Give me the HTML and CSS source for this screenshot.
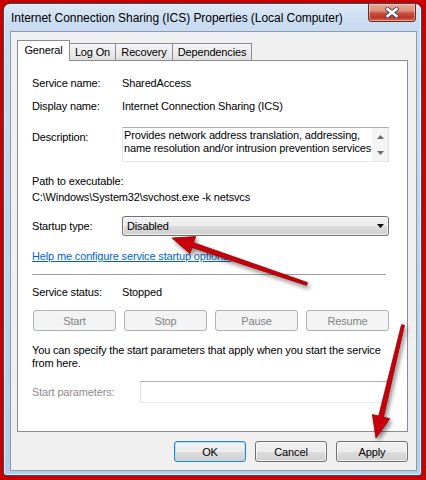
FILE: index.html
```html
<!DOCTYPE html>
<html lang="en">
<head>
    <meta charset="UTF-8">
    <title>Internet Connection Sharing (ICS) Properties (Local Computer)</title>
    <link rel="stylesheet" href="styles.css">
</head>
<body>
    <div class="window">
        <div class="titlebar">
            <span class="title">Internet Connection Sharing (ICS) Properties (Local Computer)</span>
            <div class="close">
                <svg width="14" height="11" viewBox="-7 -5.5 14 11">
                    <path d="M-4.5 -3.5 L4.5 3.5 M4.5 -3.5 L-4.5 3.5" stroke="#404a56" stroke-width="4.4" stroke-linecap="square"/>
                    <path d="M-4.5 -3.5 L4.5 3.5 M4.5 -3.5 L-4.5 3.5" stroke="#fff" stroke-width="2.4" stroke-linecap="square"/>
                </svg>
            </div>
        </div>

        <div class="client">
            <div class="tabs">
                <div class="tab tab-active">General</div>
                <div class="tab tab-logon">Log On</div>
                <div class="tab tab-recovery">Recovery</div>
                <div class="tab tab-deps">Dependencies</div>
            </div>

            <div class="panel">
                <div class="row">
                    <span class="label">Service name:</span>
                    <span>SharedAccess</span>
                </div>
                <div class="row row-display">
                    <span class="label">Display name:</span>
                    <span>Internet Connection Sharing (ICS)</span>
                </div>
                <div class="row row-desc">
                    <span class="label label-desc">Description:</span>
                    <div class="desc-box">
                        <div class="desc-text">Provides network address translation, addressing,<br>name resolution and/or intrusion prevention services</div>
                        <div class="scroll">
                            <svg width="7" height="4" viewBox="0 0 7 4"><path d="M0 4 L3.5 0 L7 4 Z" fill="#6b6b6b"/></svg>
                            <svg width="7" height="4" viewBox="0 0 7 4"><path d="M0 0 L3.5 4 L7 0 Z" fill="#6b6b6b"/></svg>
                        </div>
                    </div>
                </div>

                <div class="path-label">Path to executable:</div>
                <div class="path-value">C:\Windows\System32\svchost.exe -k netsvcs</div>

                <div class="row row-startup">
                    <span class="label">Startup type:</span>
                    <div class="combo">
                        <span>Disabled</span>
                        <svg width="7" height="4" viewBox="0 0 7 4"><path d="M0 0 L3.5 4 L7 0 Z" fill="#000"/></svg>
                    </div>
                </div>

                <a class="help-link" href="#">Help me configure service startup options.</a>

                <div class="separator"></div>

                <div class="row row-status">
                    <span class="label">Service status:</span>
                    <span>Stopped</span>
                </div>

                <div class="service-buttons">
                    <button class="btn" disabled>Start</button>
                    <button class="btn" disabled>Stop</button>
                    <button class="btn" disabled>Pause</button>
                    <button class="btn" disabled>Resume</button>
                </div>

                <p class="note">You can specify the start parameters that apply when you start the service<br>from here.</p>

                <div class="row row-params">
                    <span class="label label-params">Start parameters:</span>
                    <div class="params-input"></div>
                </div>
            </div>

            <div class="dialog-buttons">
                <button class="btn btn-default">OK</button>
                <button class="btn">Cancel</button>
                <button class="btn">Apply</button>
            </div>
        </div>
    </div>

    <svg class="arrows" width="426" height="480" viewBox="0 0 426 480">
        <defs>
            <filter id="shadow" x="-30%" y="-30%" width="160%" height="160%">
                <feDropShadow dx="2" dy="3" stdDeviation="2" flood-color="#000" flood-opacity="0.45"/>
            </filter>
        </defs>
        <g filter="url(#shadow)" fill="#c8000a" stroke="#900000" stroke-width="0.8" stroke-linejoin="round">
            <polygon points="307.5,282.6 193.6,242.7 195.7,236.6 172,238 189.9,253.6 192,247.5 306.5,285.4"/>
            <polygon points="404.5,325.3 383.5,417.2 389.8,418.7 376,438 372.4,414.5 378.7,416 401.5,324.7"/>
        </g>
    </svg>
</body>
</html>
```

FILE: styles.css
```css
body {
    margin: 0;
    width: 426px;
    height: 480px;
    overflow: hidden;
    background-color: #c80000;
    font-family: "Liberation Sans", Arial, sans-serif;
    font-size: 11px;
    color: #000;
}

.window {
    box-sizing: border-box;
    width: 419px;
    height: 473px;
    margin: 3px 0 0 3px;
    padding: 0 4px 0 6px;
    border: 1px solid #3d4a5a;
    border-radius: 7px 7px 3px 3px;
    background: linear-gradient(180deg, #dce9f7 0, #c9dcf1 20px, #bcd3ec 60%, #b6cde8 100%);
    box-shadow: inset 0 0 0 1px rgba(255, 255, 255, 0.55);
}

.titlebar {
    display: flex;
    justify-content: space-between;
    height: 27px;
}

.title {
    align-self: center;
    padding-left: 1px;
    font-size: 12px;
    letter-spacing: -0.05px;
    color: #000;
}

.close {
    display: flex;
    align-items: center;
    justify-content: center;
    width: 46px;
    height: 17px;
    margin-right: 1px;
    border: 1px solid #6b2a26;
    border-top: none;
    border-radius: 0 0 4px 4px;
    background: linear-gradient(180deg, #e9ab9b 0, #dc8f7c 40%, #c8503f 55%, #bd3626 80%, #d56e58 100%);
    box-shadow: inset 0 0 0 1px rgba(255, 220, 210, 0.5);
}

.client {
    box-sizing: border-box;
    width: 407px;
    height: 440px;
    padding: 8px 8px 0 6px;
    border: 1px solid #8a9bb0;
    background-color: #f0f0f0;
    letter-spacing: -0.15px;
}

.tabs {
    display: flex;
    align-items: flex-end;
    height: 20px;
}

.tab {
    box-sizing: border-box;
    height: 17px;
    line-height: 16px;
    border: 1px solid #898c95;
    border-bottom: none;
    text-align: center;
    background: linear-gradient(180deg, #f6f6f6 0, #ececec 50%, #e0e0e0 100%);
}

.tab-active {
    position: relative;
    z-index: 1;
    width: 53px;
    height: 21px;
    margin-bottom: -1px;
    line-height: 18px;
    background: #fff;
}

.tab-logon {
    width: 47px;
    margin-left: -1px;
}

.tab-recovery {
    width: 58px;
    margin-left: -1px;
}

.tab-deps {
    width: 80px;
    margin-left: -1px;
}

.panel {
    box-sizing: border-box;
    height: 372px;
    padding: 14px 18px 0 14px;
    border: 1px solid #898c95;
    background-color: #fff;
}

.row {
    display: flex;
    align-items: center;
    height: 16px;
}

.label {
    flex: 0 0 90px;
}

.row-display {
    margin-top: 7px;
}

.row-desc {
    align-items: flex-start;
    height: auto;
    margin-top: 13px;
}

.label-desc {
    padding-top: 4px;
}

.desc-box {
    box-sizing: border-box;
    display: flex;
    flex: 1;
    min-width: 0;
    height: 35px;
    border: 1px solid #abadb3;
    border-color: #abadb3 #dbdfe6 #e3e9ef #e2e3ea;
}

.desc-text {
    flex: 1;
    min-width: 0;
    padding: 1px 0 0 1px;
    line-height: 13px;
    white-space: nowrap;
    overflow: hidden;
}

.scroll {
    display: flex;
    flex-direction: column;
    justify-content: space-between;
    align-items: center;
    width: 16px;
    padding: 7px 0 6px;
    background-color: #f4f4f4;
}

.path-label {
    margin-top: 11px;
    line-height: 16px;
}

.path-value {
    line-height: 16px;
}

.row-startup {
    height: 20px;
    margin-top: 11px;
}

.combo {
    box-sizing: border-box;
    display: flex;
    align-items: center;
    justify-content: space-between;
    flex: 1;
    height: 20px;
    padding: 0 4px 0 4px;
    border: 1px solid #707070;
    border-radius: 3px;
    background: linear-gradient(180deg, #f2f2f2 0, #ebebeb 50%, #dddddd 50%, #cfcfcf 100%);
    box-shadow: inset 0 0 0 1px rgba(255, 255, 255, 0.7);
}

.help-link {
    display: block;
    margin-top: 12px;
    line-height: 16px;
    color: #0066cc;
}

.separator {
    height: 1px;
    margin: 10px 3px 0 0;
    background-color: #a0a0a0;
}

.row-status {
    margin-top: 9px;
}

.service-buttons {
    display: grid;
    grid-template-columns: repeat(4, 1fr);
    gap: 8px;
    margin: 10px 0 0 1px;
}

.btn {
    box-sizing: border-box;
    height: 21px;
    padding: 0;
    border: 1px solid #707070;
    border-radius: 3px;
    background: linear-gradient(180deg, #f2f2f2 0, #ebebeb 50%, #dddddd 50%, #cfcfcf 100%);
    box-shadow: inset 0 0 0 1px rgba(255, 255, 255, 0.7);
    font-family: inherit;
    font-size: 11px;
    letter-spacing: inherit;
    color: #000;
}

.btn:disabled {
    border-color: #adb2b5;
    background: #f4f4f4;
    box-shadow: none;
    color: #838383;
}

.note {
    margin: 13px 0 0;
    line-height: 13px;
}

.row-params {
    height: 22px;
    margin-top: 11px;
}

.label-params {
    flex: 0 0 108px;
    color: #8d8d8d;
}

.params-input {
    box-sizing: border-box;
    flex: 1;
    height: 22px;
    border: 1px solid #abadb3;
    border-color: #abadb3 #dbdfe6 #e3e9ef #e2e3ea;
}

.dialog-buttons {
    display: flex;
    justify-content: flex-end;
    gap: 9px;
    margin-top: 9px;
}

.dialog-buttons .btn {
    width: 72px;
}

.btn-default {
    border-color: #3c7fb1;
    box-shadow: inset 0 0 0 1px #a6e4fb;
}

.arrows {
    position: absolute;
    top: 0;
    left: 0;
    pointer-events: none;
}
```
